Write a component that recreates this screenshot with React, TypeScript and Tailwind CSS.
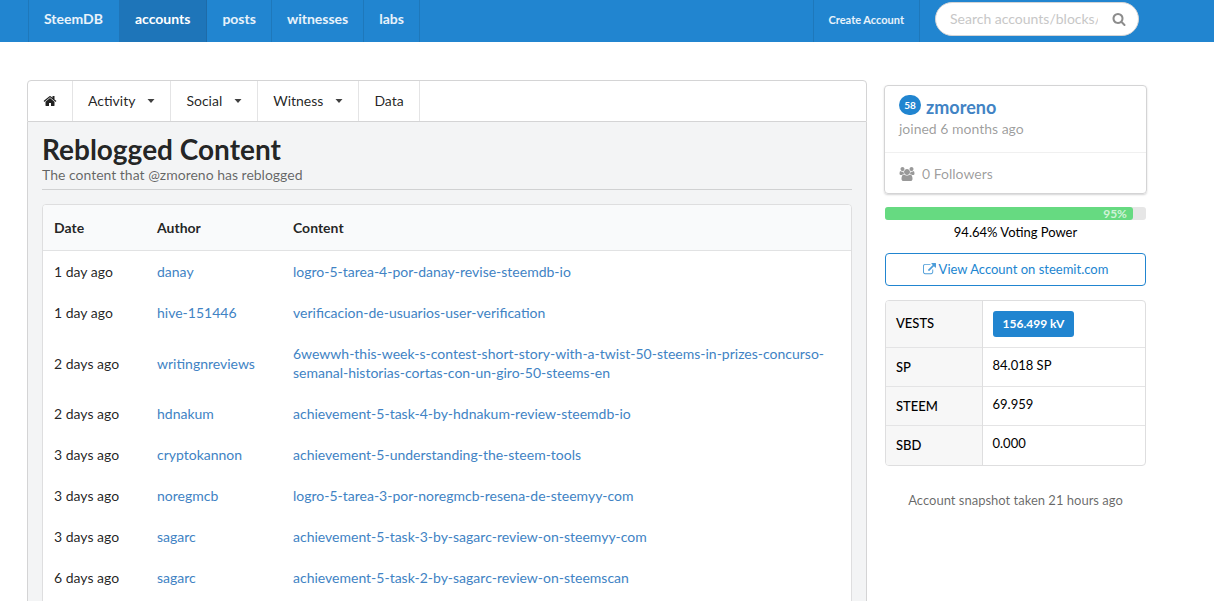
import type { ReactNode } from "react";

/* =========================================================
   ICONS
========================================================= */

interface IconProps {
  path: string;
  className: string;
  viewBox?: string;
}

function Icon({ path, className, viewBox = "0 0 1792 1792" }: IconProps) {
  return (
    <svg viewBox={viewBox} className={className} fill="currentColor" aria-hidden="true">
      <path d={path} />
    </svg>
  );
}

const HOME =
  "M1472 992v480q0 26-19 45t-45 19h-384v-384h-256v384h-384q-26 0-45-19t-19-45v-480q0-1 .5-3t.5-3l575-474 575 474q1 2 1 6zm223-69l-62 74q-8 9-21 11h-3q-13 0-21-7l-692-577-692 577q-12 8-24 7-13-2-21-11l-62-74q-8-10-7-23.5t11-21.5l719-599q32-26 76-26t76 26l244 204v-195q0-14 9-23t23-9h192q14 0 23 9t9 23v408l219 182q10 8 11 21.5t-7 23.5z";

const SEARCH =
  "M1216 832q0-185-131.5-316.5t-316.5-131.5-316.5 131.5-131.5 316.5 131.5 316.5 316.5 131.5 316.5-131.5 131.5-316.5zm512 832q0 52-38 90t-90 38q-54 0-90-38l-343-342q-179 124-399 124-143 0-273.5-55.5t-225-150-150-225-55.5-273.5 55.5-273.5 150-225 225-150 273.5-55.5 273.5 55.5 225 150 150 225 55.5 273.5q0 220-124 399l343 343q37 37 37 90z";

const USERS =
  "M657 896q-162 5-265 128h-134q-82 0-138-40.5t-56-118.5q0-353 124-353 6 0 43.5 21t97.5 42.5 119 21.5q67 0 133-23-5 37-5 66 0 139 81 256zm1071 637q0 120-73 189.5t-194 69.5h-874q-121 0-194-69.5t-73-189.5q0-53 3.5-103.5t14-109 26.5-108.5 43-97.5 62-81 85.5-53.5 111.5-20q10 0 43 21.5t73 48 107 48 135 21.5 135-21.5 107-48 73-48 43-21.5q61 0 111.5 20t85.5 53.5 62 81 43 97.5 26.5 108.5 14 109 3.5 103.5zm-1024-1277q0 106-75 181t-181 75-181-75-75-181 75-181 181-75 181 75 75 181zm704 384q0 159-112.5 271.5t-271.5 112.5-271.5-112.5-112.5-271.5 112.5-271.5 271.5-112.5 271.5 112.5 112.5 271.5zm576 225q0 78-56 118.5t-138 40.5h-134q-103-123-265-128 81-117 81-256 0-29-5-66 66 23 133 23 59 0 119-21.5t97.5-42.5 43.5-21q124 0 124 353zm-128-609q0 106-75 181t-181 75-181-75-75-181 75-181 181-75 181 75 75 181z";

const EXTERNAL =
  "M1408 928v320q0 119-84.5 203.5t-203.5 84.5h-832q-119 0-203.5-84.5t-84.5-203.5v-832q0-119 84.5-203.5t203.5-84.5h704q14 0 23 9t9 23v64q0 14-9 23t-23 9h-704q-66 0-113 47t-47 113v832q0 66 47 113t113 47h832q66 0 113-47t47-113v-320q0-14 9-23t23-9h64q14 0 23 9t9 23zm384-864v512q0 26-19 45t-45 19-45-19l-176-176-652 652q-10 10-23 10t-23-10l-114-114q-10-10-10-23t10-23l652-652-176-176q-19-19-19-45t19-45 45-19h512q26 0 45 19t19 45z";

/* =========================================================
   DATA
========================================================= */

const NAV = ["posts", "witnesses", "labs"];

const POSTS = [
  ["1 day ago", "danay", "logro-5-tarea-4-por-danay-revise-steemdb-io"],
  ["1 day ago", "hive-151446", "verificacion-de-usuarios-user-verification"],
  [
    "2 days ago",
    "writingnreviews",
    "6wewwh-this-week-s-contest-short-story-with-a-twist-50-steems-in-prizes-concurso-semanal-historias-cortas-con-un-giro-50-steems-en",
  ],
  ["2 days ago", "hdnakum", "achievement-5-task-4-by-hdnakum-review-steemdb-io"],
  ["3 days ago", "cryptokannon", "achievement-5-understanding-the-steem-tools"],
  ["3 days ago", "noregmcb", "logro-5-tarea-3-por-noregmcb-resena-de-steemyy-com"],
  ["3 days ago", "sagarc", "achievement-5-task-3-by-sagarc-review-on-steemyy-com"],
  ["6 days ago", "sagarc", "achievement-5-task-2-by-sagarc-review-on-steemscan"],
];

const BALANCES = [
  ["SP", "84.018 SP"],
  ["STEEM", "69.959"],
  ["SBD", "0.000"],
];

/* =========================================================
   TOP BAR
========================================================= */

function TopBar() {
  return (
    <header className="bg-[#2185d0] pl-7 pr-[75px]">
      <nav className="flex h-[42px] items-stretch text-sm font-bold text-white/90">
        <a href="#" className="flex items-center border-l border-[#1e78bb] pl-[15px] pr-4 pb-1">
          SteemDB
        </a>
        <a href="#" className="flex items-center border-r border-[#1e6ba8] bg-[#1e75b9] px-4 pb-1 text-white">
          accounts
        </a>
        {NAV.map((item) => (
          <a key={item} href="#" className="flex items-center border-r border-[#1e78bb] px-[15px] pb-1">
            {item}
          </a>
        ))}

        <a href="#" className="ml-auto flex items-center border-x border-[#1e78bb] px-[15px] pb-0.5 text-[11px]">
          Create Account
        </a>
        <form className="ml-[15px] mt-0.5 flex h-[34px] w-[204px] items-center rounded-full border border-[#d4d4d5] bg-white pl-3.5 pr-3">
          <input
            type="text"
            aria-label="Search"
            placeholder="Search accounts/blocks/transactions"
            className="min-w-0 flex-1 bg-transparent font-normal text-gray-800 outline-none placeholder:text-[#c7c7c7]"
          />
          <button type="button" aria-label="Submit search" className="ml-3.5 text-[#8c8c8c]">
            <Icon path={SEARCH} className="size-3.5" />
          </button>
        </form>
      </nav>
    </header>
  );
}

/* =========================================================
   MAIN COLUMN
========================================================= */

function Tab({ children, caret = false }: { children: ReactNode; caret?: boolean }) {
  return (
    <button type="button" className="flex items-center border-r border-[#e4e4e5] px-[15px]">
      {children}
      {caret && (
        <svg viewBox="0 0 8 4" className="ml-3 h-1 w-2 text-[#404040]" fill="currentColor" aria-hidden="true">
          <path d="M0.5 0h7L4 4z" />
        </svg>
      )}
    </button>
  );
}

function Reblogs() {
  return (
    <main className="min-w-0 flex-1">
      <div className="flex h-[42px] rounded-t border border-[#d4d4d5] bg-white">
        <Tab>
          <Icon path={HOME} className="size-3.5" />
        </Tab>
        <Tab caret>Activity</Tab>
        <Tab caret>Social</Tab>
        <Tab caret>Witness</Tab>
        <Tab>Data</Tab>
      </div>

      <section className="border-x border-b border-[#d4d4d5] bg-[#f3f4f5] px-3.5 pb-3.5 pt-[11px]">
        <div className="border-b border-[#d0d1d2] pb-[5px]">
          <h1 className="text-[28px] font-bold leading-8">Reblogged Content</h1>
          <p className="leading-[19px] text-black/60">The content that @zmoreno has reblogged</p>
        </div>

        <div className="mt-3.5 overflow-hidden rounded border border-[#dededf] bg-white pb-4">
          <table className="w-full table-fixed text-left leading-[19px]">
            <colgroup>
              <col className="w-[103px]" />
              <col className="w-[136px]" />
              <col />
            </colgroup>
            <thead>
              <tr className="border-b border-[#e1e2e3] bg-[#f9fafb]">
                <th className="px-[11px] py-[13px] font-bold">Date</th>
                <th className="px-[11px] py-[13px] font-bold">Author</th>
                <th className="px-[11px] py-[13px] font-bold">Content</th>
              </tr>
            </thead>
            <tbody>
              {POSTS.map(([date, author, slug]) => (
                <tr key={slug}>
                  <td className="px-[11px] py-[11px]">{date}</td>
                  <td className="px-[11px] py-[11px]">
                    <a href="#" className="text-[#4183c4]">{author}</a>
                  </td>
                  <td className="px-[11px] py-[11px]">
                    <a href="#" className="text-[#4183c4]">{slug}</a>
                  </td>
                </tr>
              ))}
            </tbody>
          </table>
        </div>
      </section>
    </main>
  );
}

/* =========================================================
   SIDEBAR
========================================================= */

function Sidebar() {
  return (
    <aside className="w-[263px] shrink-0 pt-[5px]">
      {/* Profile */}
      <div className="rounded border border-[#d4d4d5] shadow-[0_1px_2px_0_#d4d4d5]">
        <div className="px-3.5 pb-[13px] pt-[9px]">
          <div className="flex items-center gap-[5px]">
            <span className="mb-1 flex h-5 w-[22px] items-center justify-center rounded-full bg-[#2185d0] text-[10px] font-bold text-white">
              58
            </span>
            <a href="#" className="text-lg font-bold leading-6 text-[#4183c4]">zmoreno</a>
          </div>
          <p className="leading-5 text-black/40">joined 6 months ago</p>
        </div>
        <div className="flex items-center gap-[7px] border-t border-[#f0f0f0] px-3.5 pb-2.5 pt-3 leading-[18px] text-black/40">
          <Icon path={USERS} viewBox="0 0 2048 1792" className="h-3.5 w-4" />
          0 Followers
        </div>
      </div>

      <div className="px-px">
        {/* Voting power */}
        <div className="mt-[13px] h-[13px] rounded-[3px] bg-[#e6e6e6]">
          <div className="flex h-full w-[95%] items-center justify-end rounded-[3px] bg-[#66da81] pr-1.5 text-xs font-bold leading-3 text-white/70">
            95%
          </div>
        </div>
        <p className="mt-0.5 text-center text-[13px] leading-5 text-black">94.64% Voting Power</p>

        <a
          href="#"
          className="mt-[11px] flex h-[33px] items-center justify-center gap-[3px] rounded border border-[#2185d0] text-[13px] text-[#2185d0]"
        >
          <Icon path={EXTERNAL} className="size-[13px] opacity-80" />
          View Account on steemit.com
        </a>

        {/* Balances */}
        <div className="mt-3.5 overflow-hidden rounded border border-[#dededf]">
          <table className="w-full text-left text-[13px] leading-[18px] text-black">
            <tbody>
              <tr>
                <th className="w-24 border-r border-[#dededf] bg-[#f7f7f7] px-2.5 pb-0.5 font-medium">VESTS</th>
                <td className="px-2.5 py-2.5">
                  <span className="inline-block rounded-[3px] bg-[#2185d0] px-2.5 py-1 text-xs font-bold leading-[18px] text-white">
                    156.499 kV
                  </span>
                </td>
              </tr>
              {BALANCES.map(([unit, amount]) => (
                <tr key={unit} className="h-[39px] border-t border-[#e4e4e5]">
                  <th className="border-r border-[#dededf] bg-[#f7f7f7] px-2.5 font-medium">{unit}</th>
                  <td className="px-2.5 pb-1">{amount}</td>
                </tr>
              ))}
            </tbody>
          </table>
        </div>

        <p className="mt-6 text-center text-[13px] leading-5 text-black/60">
          Account snapshot taken 21 hours ago
        </p>
      </div>
    </aside>
  );
}

export default function App() {
  return (
    <div className="h-screen overflow-hidden bg-white font-['Lato',sans-serif] text-sm text-black/87">
      <TopBar />
      <div className="flex items-start gap-[17px] pl-[27px] pr-[67px] pt-[38px]">
        <Reblogs />
        <Sidebar />
      </div>
    </div>
  );
}
